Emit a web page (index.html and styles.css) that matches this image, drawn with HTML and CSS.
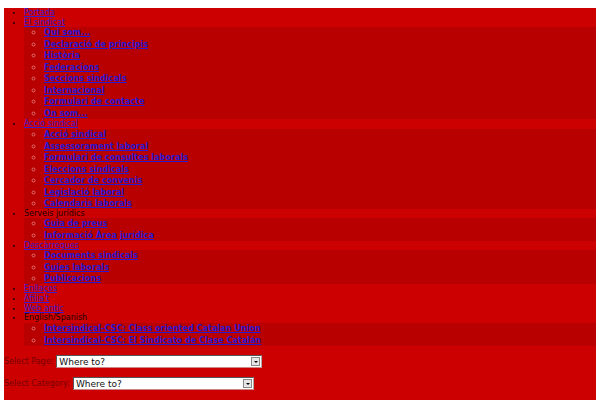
FILE: index.html
```html
<!DOCTYPE html>
<html>
<head>
<meta charset="utf-8">
<link rel="stylesheet" href="styles.css">
</head>
<body>
<div class="wrap">
  <ul class="menu">
    <li class="tall"><a href="#">Portada</a></li>
    <li><a href="#">El sindicat</a>
      <ul class="sub">
        <li><a href="#">Qui som...</a></li>
        <li><a href="#">Declaració de principis</a></li>
        <li><a href="#">Història</a></li>
        <li><a href="#">Federacions</a></li>
        <li><a href="#">Seccions sindicals</a></li>
        <li><a href="#">Internacional</a></li>
        <li><a href="#">Formulari de contacte</a></li>
        <li><a href="#">On som...</a></li>
      </ul>
    </li>
    <li class="tall"><a href="#">Acció sindical</a>
      <ul class="sub">
        <li><a href="#">Acció sindical</a></li>
        <li><a href="#">Assessorament laboral</a></li>
        <li><a href="#">Formulari de consultes laborals</a></li>
        <li><a href="#">Eleccions sindicals</a></li>
        <li><a href="#">Cercador de convenis</a></li>
        <li><a href="#">Legislació laboral</a></li>
        <li><a href="#">Calendaris laborals</a></li>
      </ul>
    </li>
    <li>Serveis jurídics
      <ul class="sub">
        <li><a href="#">Guia de preus</a></li>
        <li><a href="#">Informació Àrea jurídica</a></li>
      </ul>
    </li>
    <li><a href="#">Descàrregues</a>
      <ul class="sub">
        <li><a href="#">Documents sindicals</a></li>
        <li><a href="#">Guies laborals</a></li>
        <li><a href="#">Publicacions</a></li>
      </ul>
    </li>
    <li class="tall"><a href="#">Enllaços</a></li>
    <li class="tall"><a href="#">Afilia't</a></li>
    <li><a href="#">Web antic</a></li>
    <li class="tall">English/Spanish
      <ul class="sub">
        <li><a href="#">Intersindical-CSC: Class oriented Catalan Union</a></li>
        <li><a href="#">Intersindical-CSC: El Sindicato de Clase Catalán</a></li>
      </ul>
    </li>
  </ul>
  <div class="selrow first">
    <span class="lbl">Select Page:</span>
    <span class="sel page"><span class="val">Where to?</span><span class="arrow"></span></span>
  </div>
  <div class="selrow">
    <span class="lbl">Select Category:</span>
    <span class="sel cat"><span class="val">Where to?</span><span class="arrow"></span></span>
  </div>
</div>
<div class="search"></div>
</body>
</html>
```

FILE: styles.css
```css
html, body {
  margin: 0;
  padding: 0;
  background: #ffffff;
}
body {
  padding: 8px 4px 0 4px;
  font-family: "DejaVu Sans", sans-serif;
}
.wrap {
  background: #cc0000;
  padding-bottom: 1px;
}
.menu {
  margin: 0;
  padding: 0 0 0 20px;
  list-style: disc;
  font-size: 8px;
  line-height: 9px;
  color: #220000;
}
.menu > li.tall {
  line-height: 10px;
}
.menu a {
  color: #3a1ad0;
}
.sub {
  margin: 0;
  padding: 0 0 0 20px;
  background: #b80000;
  list-style: circle;
  font-family: "DejaVu Sans Condensed", "DejaVu Sans", sans-serif;
  font-weight: bold;
  font-size: 9px;
  line-height: 11px;
  color: #e07070;
}
.menu > li > .sub > li {
  line-height: 11px;
}
.menu > li > .sub > li:nth-child(even) {
  line-height: 12px;
}
.sub a {
  color: #2a18d0;
}
.selrow {
  display: flex;
  align-items: center;
  font-size: 8px;
  color: #770000;
  height: 13px;
  margin-bottom: 9px;
}
.selrow.first {
  margin-top: 9px;
}
.lbl {
  margin-right: 3px;
}
.sel {
  display: flex;
  align-items: center;
  justify-content: space-between;
  box-sizing: border-box;
  height: 13px;
  background: #ffffff;
  border: 1px solid #555555;
  border-right-color: #aaaaaa;
  border-bottom-color: #cc8888;
  font-size: 9px;
  color: #111111;
  padding-left: 2px;
}
.sel.page { width: 206px; }
.sel.cat { width: 181px; }
.arrow {
  width: 9px;
  height: 9px;
  margin-right: 1px;
  background: #e6e6e6;
  border: 1px solid #888888;
  box-sizing: border-box;
  position: relative;
}
.arrow::after {
  content: "";
  position: absolute;
  left: 2px;
  top: 3px;
  border-left: 2px solid transparent;
  border-right: 2px solid transparent;
  border-top: 2px solid #000;
}
.search {
  margin: 5px 0 0 12px;
  width: 150px;
  height: 10px;
  border-top: 1px solid #cccccc;
  border-left: 1px solid #dddddd;
}
```
